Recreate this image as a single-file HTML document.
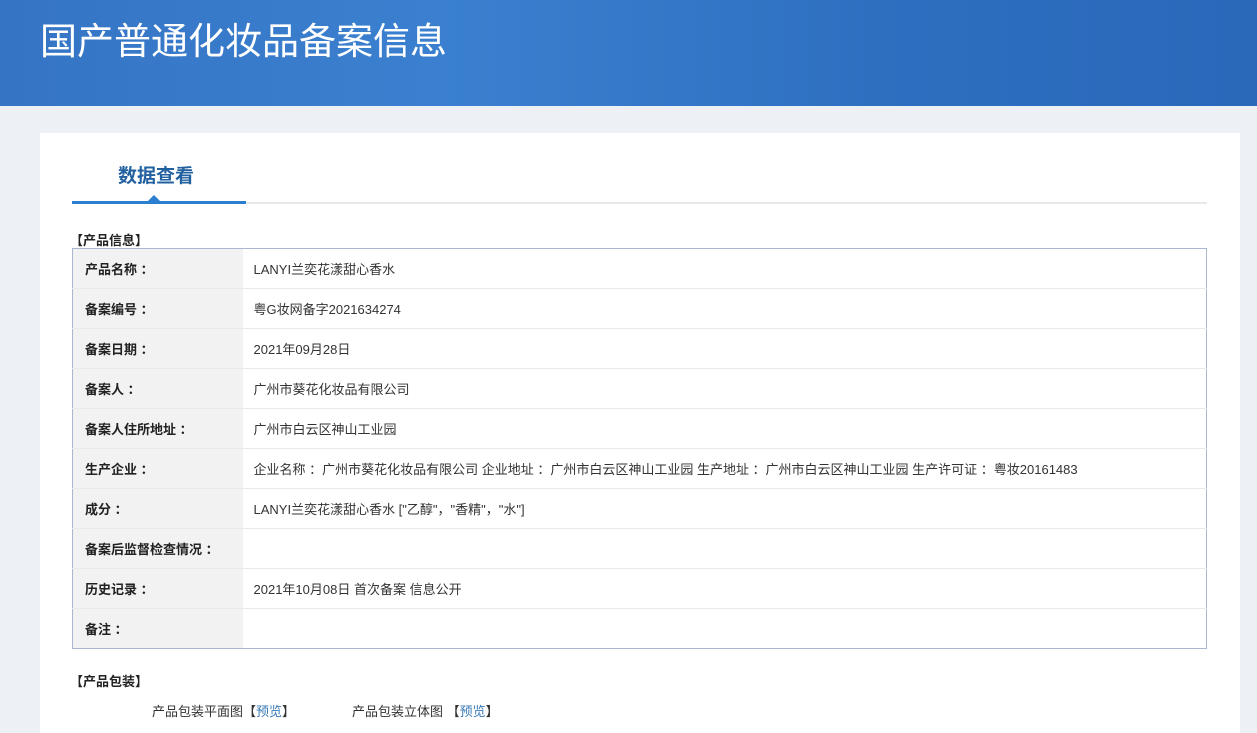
<!DOCTYPE html>
<html><head><meta charset="utf-8"><style>
body{margin:0;width:1257px;height:722px;overflow:hidden;background:#edf1f5;font-family:"Liberation Sans","Noto Sans CJK SC",sans-serif;position:relative}
.hd{position:absolute;left:0;top:0;width:1257px;height:106px;background:linear-gradient(90deg,#3574c4 0%,#3b80d0 35%,#2e6fc0 70%,#2a68ba 100%)}
.hd h1{position:absolute;left:40px;top:11px;margin:0;font-weight:normal;color:#fff;font-size:37px;font-family:"Noto Sans CJK SC",sans-serif}
.card{position:absolute;left:40px;top:133px;width:1200px;height:600px;background:#fff}
.tab{position:absolute;left:118px;top:161px;font-size:19px;font-weight:bold;color:#22609f}
.ul{position:absolute;left:72px;top:202px;width:1135px;height:2px;background:#e6e9ec}
.ulb{position:absolute;left:72px;top:201px;width:174px;height:3px;background:#2a7fd0}
.tri{position:absolute;left:147px;top:195px;width:0;height:0;border-left:7px solid transparent;border-right:7px solid transparent;border-bottom:7px solid #2a7fd0}
.sec{position:absolute;font-size:13px;font-weight:bold;color:#222}
table{position:absolute;left:72px;top:248px;width:1135px;border:1px solid #a9b7d0;border-collapse:collapse;font-size:13px;color:#333}
td{height:39px;border-bottom:1px solid #eaeaea;padding:0}
td.l{width:170px;background:#f2f2f2;font-weight:bold;padding-left:12px;box-sizing:border-box;color:#222}
td.v{padding-left:11px}
.pk{position:absolute;top:701px;font-size:13px;color:#333}
.pk a{color:#3a7ab8;text-decoration:none}
</style></head><body>
<div class="hd"><h1>国产普通化妆品备案信息</h1></div>
<div class="card"></div>
<div class="tab">数据查看</div>
<div class="ul"></div><div class="ulb"></div><div class="tri"></div>
<div class="sec" style="left:70px;top:230px">【产品信息】</div>
<table>
<tr><td class="l">产品名称 ：</td><td class="v">LANYI兰奕花漾甜心香水</td></tr>
<tr><td class="l">备案编号 ：</td><td class="v">粤G妆网备字2021634274</td></tr>
<tr><td class="l">备案日期 ：</td><td class="v">2021年09月28日</td></tr>
<tr><td class="l">备案人 ：</td><td class="v">广州市葵花化妆品有限公司</td></tr>
<tr><td class="l">备案人住所地址 ：</td><td class="v">广州市白云区神山工业园</td></tr>
<tr><td class="l">生产企业 ：</td><td class="v">企业名称 ：广州市葵花化妆品有限公司 企业地址 ：广州市白云区神山工业园 生产地址 ：广州市白云区神山工业园 生产许可证 ：粤妆20161483</td></tr>
<tr><td class="l">成分 ：</td><td class="v">LANYI兰奕花漾甜心香水 ["乙醇"，"香精"，"水"]</td></tr>
<tr><td class="l">备案后监督检查情况 ：</td><td class="v"></td></tr>
<tr><td class="l">历史记录 ：</td><td class="v">2021年10月08日 首次备案 信息公开</td></tr>
<tr><td class="l" style="border-bottom:none">备注 ：</td><td class="v" style="border-bottom:none"></td></tr>
</table>
<div class="sec" style="left:70px;top:671px">【产品包装】</div>
<div class="pk" style="left:152px">产品包装平面图【<a>预览</a>】</div>
<div class="pk" style="left:352px">产品包装立体图 【<a>预览</a>】</div>
</body></html>
